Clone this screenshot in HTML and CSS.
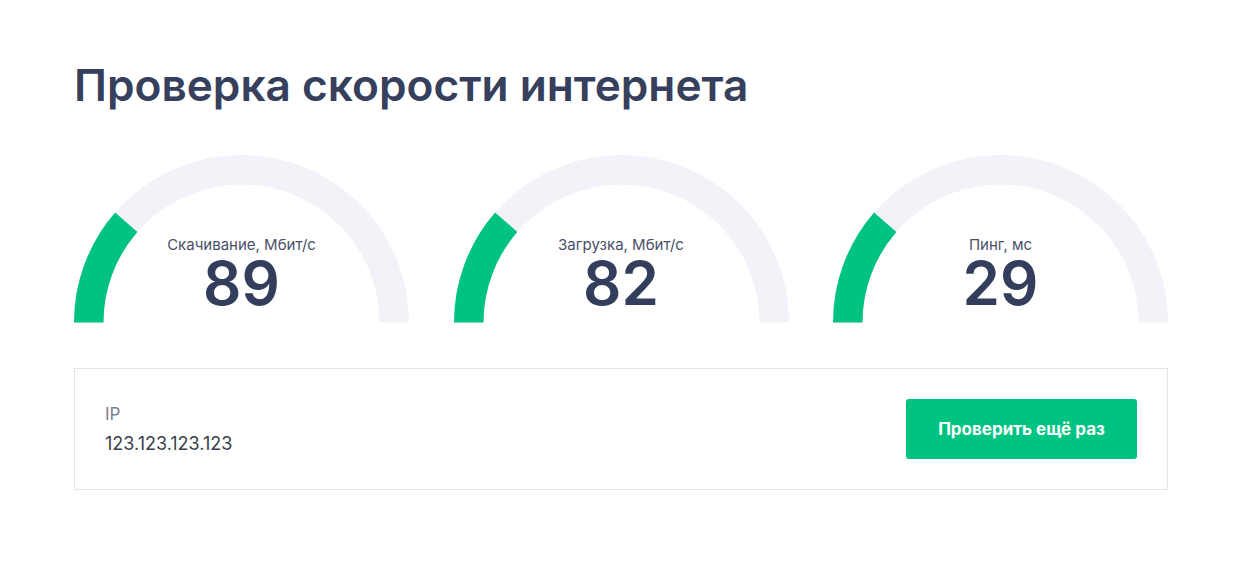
FILE: index.html
```html
<!DOCTYPE html>
<html>
<head>
    <title>Проверка скорости интернета</title>
    <link rel="stylesheet" href="styles.css">
</head>
<body>
    <div class="page">
        <h1>Проверка скорости интернета</h1>

        <div class="gauges">
            <div class="gauge">
                <svg viewBox="0 0 335 168" width="335" height="168">
                    <path class="track" d="M 14.75 167.5 A 152.75 152.75 0 0 1 320.25 167.5" />
                    <path class="fill" d="M 14.75 167.5 A 152.75 152.75 0 0 1 52.22 67.29" />
                </svg>
                <div class="gauge-info">
                    <div class="gauge-label">Скачивание, Мбит/с</div>
                    <div class="gauge-value">89</div>
                </div>
            </div>
            <div class="gauge">
                <svg viewBox="0 0 335 168" width="335" height="168">
                    <path class="track" d="M 14.75 167.5 A 152.75 152.75 0 0 1 320.25 167.5" />
                    <path class="fill" d="M 14.75 167.5 A 152.75 152.75 0 0 1 52.22 67.29" />
                </svg>
                <div class="gauge-info">
                    <div class="gauge-label">Загрузка, Мбит/с</div>
                    <div class="gauge-value">82</div>
                </div>
            </div>
            <div class="gauge">
                <svg viewBox="0 0 335 168" width="335" height="168">
                    <path class="track" d="M 14.75 167.5 A 152.75 152.75 0 0 1 320.25 167.5" />
                    <path class="fill" d="M 14.75 167.5 A 152.75 152.75 0 0 1 52.22 67.29" />
                </svg>
                <div class="gauge-info">
                    <div class="gauge-label">Пинг, мс</div>
                    <div class="gauge-value">29</div>
                </div>
            </div>
        </div>

        <div class="info-box">
            <div class="ip">
                <div class="ip-label">IP</div>
                <div class="ip-value">123.123.123.123</div>
            </div>
            <button class="retry">Проверить ещё раз</button>
        </div>
    </div>
</body>
</html>
```

FILE: styles.css
```css
body {
    margin: 0;
    background: #fff;
    font-family: Inter, "Noto Sans", sans-serif;
}
.page {
    width: 1094px;
    padding: 59px 0 0 74px;
}
h1 {
    margin: 0;
    font-size: 44.2px;
    line-height: 53px;
    font-weight: 600;
    color: #36405c;
}
.gauges {
    display: flex;
    justify-content: space-between;
    margin-top: 43px;
}
.gauge {
    position: relative;
    width: 335px;
    height: 168px;
}
.gauge svg {
    display: block;
}
.track {
    fill: none;
    stroke: #f1f3f9;
    stroke-width: 29.5;
}
.fill {
    fill: none;
    stroke: #00c281;
    stroke-width: 29.5;
}
.gauge-info {
    position: absolute;
    left: 0;
    right: 0;
    top: 81px;
    text-align: center;
}
.gauge-label {
    font-size: 15px;
    line-height: 18px;
    color: #4a5068;
}
.gauge-value {
    margin-top: 7px;
    font-size: 60px;
    line-height: 44px;
    font-weight: 600;
    color: #333d5c;
}
.info-box {
    display: flex;
    align-items: center;
    justify-content: space-between;
    margin-top: 45px;
    padding: 30px;
    border: 1px solid #e3e4e8;
}
.ip-label {
    font-size: 17px;
    line-height: 24px;
    color: #7a8290;
}
.ip-value {
    margin-top: 6px;
    font-size: 18px;
    line-height: 24px;
    color: #3a3f4b;
}
.retry {
    width: 231px;
    height: 60px;
    border: none;
    border-radius: 3px;
    background: #00c281;
    color: #fff;
    font-family: Inter, "Noto Sans", sans-serif;
    font-size: 17px;
    font-weight: 700;
    cursor: pointer;
}
```
